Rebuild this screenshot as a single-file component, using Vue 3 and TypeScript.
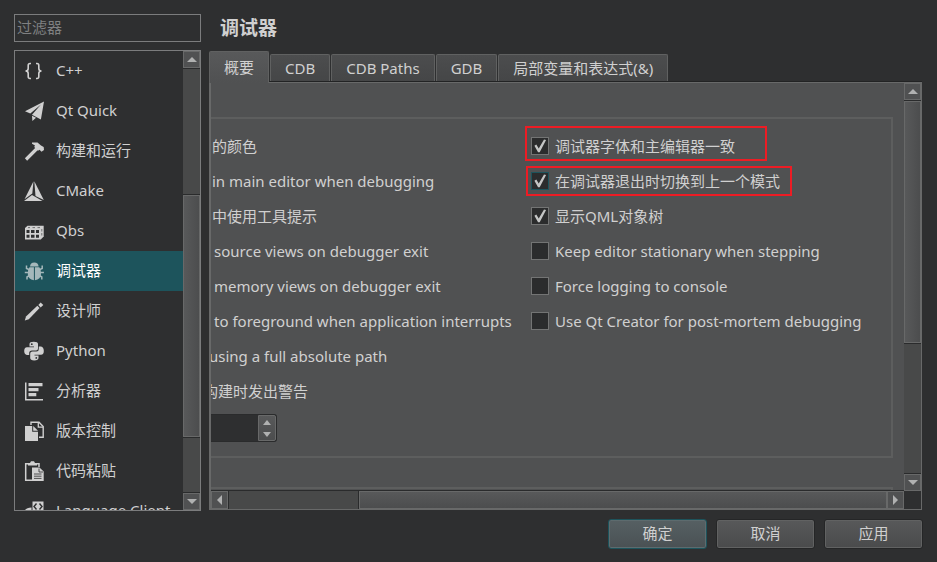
<script setup lang="ts">
import { ref } from 'vue'

interface Category {
  id: string
  label: string
}

interface Option {
  label: string
  checked: boolean
  mark?: 'first' | 'second'
}

const categories: Category[] = [
  { id: 'cpp', label: 'C++' },
  { id: 'quick', label: 'Qt Quick' },
  { id: 'build', label: '构建和运行' },
  { id: 'cmake', label: 'CMake' },
  { id: 'qbs', label: 'Qbs' },
  { id: 'debugger', label: '调试器' },
  { id: 'designer', label: '设计师' },
  { id: 'python', label: 'Python' },
  { id: 'analyzer', label: '分析器' },
  { id: 'vcs', label: '版本控制' },
  { id: 'paste', label: '代码粘贴' },
  { id: 'client', label: 'Language Client' },
]

const tabs: string[] = ['概要', 'CDB', 'CDB Paths', 'GDB', '局部变量和表达式(&)']

const leftLines: { text: string; cut?: 'word' | 'glyph' | 'space' }[] = [
  { text: '的颜色' },
  { text: 'in main editor when debugging' },
  { text: '中使用工具提示' },
  { text: 'source views on debugger exit', cut: 'space' },
  { text: 'memory views on debugger exit', cut: 'space' },
  { text: 'to foreground when application interrupts', cut: 'space' },
  { text: 'using a full absolute path', cut: 'word' },
  { text: '构建时发出警告', cut: 'glyph' },
]

const options = ref<Option[]>([
  { label: '调试器字体和主编辑器一致', checked: true, mark: 'first' },
  { label: '在调试器退出时切换到上一个模式', checked: true, mark: 'second' },
  { label: '显示QML对象树', checked: true },
  { label: 'Keep editor stationary when stepping', checked: false },
  { label: 'Force logging to console', checked: false },
  { label: 'Use Qt Creator for post-mortem debugging', checked: false },
])

const current = ref('debugger')
const activeTab = ref(0)
const filter = ref('')
const depth = ref('')
</script>

<template>
  <div class="dialog">
    <div class="body">
      <aside class="side">
        <input v-model="filter" class="filter" type="text" placeholder="过滤器" aria-label="过滤器" />
        <div class="list">
          <nav class="items">
            <button
              v-for="c in categories"
              :key="c.id"
              type="button"
              class="item"
              :class="{ selected: c.id === current }"
              @click="current = c.id"
            >
              <svg class="icon" viewBox="0 0 20 20" aria-hidden="true">
                <g v-if="c.id === 'cpp'" fill="none" stroke="currentColor" stroke-width="1.6">
                  <path d="M7 2.5H6Q4.200 2.500 4.200 4.500V7.500Q4.200 10 1.500 10Q4.200 10 4.200 12.500V15.500Q4.200 17.500 6 17.500H7" />
                  <path d="M12 2.500H13Q14.800 2.500 14.800 4.500V7.500Q14.800 10 17.500 10Q14.800 10 14.800 12.500V15.500Q14.800 17.500 13 17.500H12" />
                </g>
                <g v-else-if="c.id === 'quick'" fill="currentColor">
                  <path d="M20 0.500L1 10.200L6.300 12.600L17 3.500L8 13.700L16.900 18.500Z" />
                  <path d="M8 14.700L12 16.800L8.400 20Z" />
                </g>
                <g v-else-if="c.id === 'build'">
                  <path d="M2 18.500L13 7.500" stroke="currentColor" stroke-width="3.200" fill="none" />
                  <path d="M8 1.500H13.500L17 4.500L19.700 6L20 9L17.500 10.800L15.500 8.800L14 9.800L10.200 6L11 4.500L8 2.800Z" fill="currentColor" />
                </g>
                <g v-else-if="c.id === 'cmake'" fill="currentColor">
                  <path d="M9.500 0.300L8.300 12.500L0.500 18.300Z" />
                  <path d="M10.300 0.300L19.800 19L11.500 14.900Z" />
                  <path d="M8 14L18.500 19.900H0Z" />
                </g>
                <g v-else-if="c.id === 'qbs'">
                  <path d="M1 7L3.500 4.800H19.700V15.500L16.800 18.500H1Z" fill="currentColor" />
                  <path d="M2.500 9H5.500V12H2.500ZM7 9H10.500V12H7ZM12 9H15V12H12ZM2.500 13.700H5.500V16.800H2.500ZM7 13.700H10.500V16.800H7ZM12 13.700H15V16.800H12Z" fill="#2e2f30" />
                  <path d="M4 6.600H6M8.500 6.600H11M13.500 6.600H16M17.800 8V10.500M17.800 12V14.500" stroke="#2e2f30" stroke-width="0.600" />
                </g>
                <g v-else-if="c.id === 'debugger'">
                  <path d="M6 5.500Q6.300 1.500 10.300 1.500Q14.300 1.500 14.600 5.500Z" fill="currentColor" />
                  <path d="M9.900 6.300V19.300Q4 18.500 3.800 13Q3.600 8.500 5.500 6.300ZM10.900 6.300V19.300Q16.800 18.500 17 13Q17.200 8.500 15.300 6.300Z" fill="currentColor" />
                  <path d="M5 8.500L2.500 7.500V4.500M5 11.500H0.800M5.500 14.500L3 16V18.500M15.700 8.500L18.200 7.500V4.500M15.700 11.500H19.900M15.300 14.500L17.800 16V18.500" stroke="currentColor" stroke-width="1.500" fill="none" />
                </g>
                <g v-else-if="c.id === 'designer'" fill="currentColor">
                  <path d="M0.800 19.500L2 15.500L13.300 4.800L15.600 7L4.800 18.300Z" />
                  <path d="M14.300 4.100L16.700 1.400L19.300 4L16.700 6.500Z" />
                </g>
                <g v-else-if="c.id === 'python'">
                  <path d="M5.500 5.500V3Q5.500 0.700 9.800 0.700Q14 0.700 14 3V7.500Q14 9.500 12 9.500H8Q5.200 9.500 5.200 12V14H3Q0.200 13.500 0.200 10Q0.200 6.200 3 6.200H10V5.500Z" fill="currentColor" />
                  <path d="M14.800 5.500H17Q19.800 6 19.800 10Q19.800 13.800 17 13.800H10.500V14.500H14.500V17Q14.500 19.400 10.200 19.400Q6.200 19.400 6.200 17V12.500Q6.200 10.500 8.500 10.500H12.500Q14.800 10.500 14.800 8Z" fill="currentColor" />
                  <circle cx="7.800" cy="3.200" r="0.900" fill="#2e2f30" />
                  <circle cx="12.300" cy="16.900" r="0.900" fill="#2e2f30" />
                </g>
                <g v-else-if="c.id === 'analyzer'" fill="currentColor">
                  <path d="M1 1.500H2.500V18H19V19.500H1Z" />
                  <path d="M4.500 2H18.500V5.300H4.500ZM4.500 7H14.500V10.300H4.500ZM4.500 12H12.300V15.300H4.500Z" />
                </g>
                <g v-else-if="c.id === 'vcs'">
                  <path d="M7 4V1.300H15L19.200 5.500V16.200H15" stroke="currentColor" stroke-width="1.400" fill="none" />
                  <path d="M14.300 1.500V6.200H19" stroke="currentColor" stroke-width="1.300" fill="none" />
                  <path d="M1 5H8.200V10.800H14V20H1Z" fill="currentColor" />
                  <path d="M9.200 5L14 9.800H9.200Z" fill="currentColor" />
                </g>
                <g v-else-if="c.id === 'paste'">
                  <path d="M8 19.300H1.700V2.700H15V6" stroke="currentColor" stroke-width="1.500" fill="none" />
                  <path d="M4 2H6L7 0.300H10L11 2H13V4.500H4Z" fill="currentColor" />
                  <path d="M8 6.500H15.500L19.700 10.500V20H8Z" fill="currentColor" />
                  <path d="M15 7.500V11H19M10 13H17.500M10 15.200H17.500M10 17.400H17.500" stroke="#2e2f30" stroke-width="0.800" fill="none" />
                </g>
                <g v-else>
                  <path d="M8.500 0.500H19.500V11H13L8.500 12Z" fill="currentColor" />
                  <path d="M12.500 2.500L10 5.500L12.500 8.500M15.500 2.500L18 5.500L15.500 8.500" stroke="#2e2f30" stroke-width="1.400" fill="none" />
                  <path d="M0.500 11Q1 6.500 7.500 6.500V13H0.500Z" fill="currentColor" />
                </g>
              </svg>
              <span>{{ c.label }}</span>
            </button>
          </nav>
          <div class="vbar list-bar">
            <button type="button" class="step" aria-label="Scroll up"><i class="up"></i></button>
            <div class="space before"></div>
            <div class="thumb"></div>
            <div class="space after"></div>
            <button type="button" class="step" aria-label="Scroll down"><i class="down"></i></button>
          </div>
        </div>
      </aside>

      <main class="content">
        <h1>调试器</h1>
        <div class="tabs" role="tablist">
          <button
            v-for="(t, i) in tabs"
            :key="t"
            type="button"
            role="tab"
            class="tab"
            :class="{ active: i === activeTab }"
            :aria-selected="i === activeTab"
            @click="activeTab = i"
          >{{ t }}</button>
        </div>
        <div class="panel">
          <div class="view">
            <section class="group">
              <div class="columns">
                <div class="lines">
                  <div v-for="l in leftLines" :key="l.text" class="row" :class="l.cut">{{ l.text }}</div>
                </div>
                <div class="checks">
                  <div v-for="o in options" :key="o.label" class="row">
                    <label class="check" :class="o.mark">
                      <input v-model="o.checked" type="checkbox" />
                      <span>{{ o.label }}</span>
                    </label>
                  </div>
                </div>
              </div>
              <div class="spin">
                <input v-model="depth" type="text" aria-label="Value" />
                <div class="spin-buttons">
                  <button type="button" aria-label="Increase"><i class="up"></i></button>
                  <button type="button" aria-label="Decrease"><i class="down"></i></button>
                </div>
              </div>
            </section>
            <section class="group next"></section>
          </div>
          <div class="vbar panel-bar">
            <button type="button" class="step" aria-label="Scroll up"><i class="up"></i></button>
            <div class="thumb"></div>
            <div class="space after"></div>
            <button type="button" class="step" aria-label="Scroll down"><i class="down"></i></button>
          </div>
          <div class="hbar">
            <button type="button" class="step" aria-label="Scroll left"><i class="left"></i></button>
            <div class="space"></div>
            <div class="thumb"></div>
            <button type="button" class="step" aria-label="Scroll right"><i class="right"></i></button>
          </div>
          <div class="corner"></div>
        </div>
      </main>
    </div>
    <footer class="footer">
      <button type="button" class="push default">确定</button>
      <button type="button" class="push">取消</button>
      <button type="button" class="push">应用</button>
    </footer>
  </div>
</template>

<style>
body {
  margin: 0;
  background: #2e2f30;
}
</style>

<style scoped>
.dialog,
.dialog * {
  box-sizing: border-box;
}
.dialog {
  display: flex;
  flex-direction: column;
  gap: 8px;
  height: 100vh;
  padding: 14px 14px 13px;
  background: #2e2f30;
  color: #d0d0d0;
  font: 15px/20px "Noto Sans", "Noto Sans CJK SC", sans-serif;
}
button,
input {
  margin: 0;
  padding: 0;
  border: 0;
  border-radius: 0;
  font: inherit;
  color: inherit;
  outline: none;
}
.body {
  display: grid;
  grid-template-columns: 187px minmax(0, 1fr);
  gap: 8px;
  flex: 1;
  min-height: 0;
}
.side {
  display: flex;
  flex-direction: column;
  gap: 8px;
  min-height: 0;
}
.filter {
  flex: none;
  width: 100%;
  height: 28px;
  padding: 0 3px 2px 2px;
  border: 1px solid #7b7c7d;
  background: #2e2f30;
}
.filter::placeholder {
  color: #7f8081;
  opacity: 1;
}
.list {
  display: flex;
  flex: 1;
  min-height: 0;
  border: 1px solid #7b7c7d;
}
.items {
  flex: 1;
  min-width: 0;
  overflow: hidden;
}
.item {
  display: flex;
  align-items: center;
  gap: 12px;
  width: 100%;
  height: 40px;
  padding: 0 0 0 9px;
  background: none;
  text-align: left;
  white-space: nowrap;
}
.item span {
  padding-bottom: 2px;
}
.item.selected {
  background: #1d545c;
  color: #fff;
}
.icon {
  flex: none;
  width: 20px;
  height: 20px;
  color: #d0d0d0;
}
.selected .icon {
  color: #a5b8bb;
}

/* scroll bars */
.vbar,
.hbar {
  display: flex;
  background: #484949;
}
.vbar {
  flex-direction: column;
  width: 17px;
}
.step {
  display: flex;
  flex: none;
  align-items: center;
  justify-content: center;
  width: 17px;
  height: 17px;
  border: 1px solid #686969;
  background: #505152;
}
.vbar .thumb {
  border: 1px solid #686969;
  background: linear-gradient(90deg, #58595a, #4c4d4e);
}
.vbar .thumb,
.vbar .space {
  min-height: 0;
}
.list-bar .before {
  flex: 127;
  border-top: 1px solid #2a2b2c;
  border-bottom: 1px solid #2a2b2c;
}
.list-bar .thumb {
  flex: 243;
}
.list-bar .after {
  flex: 55;
  border-top: 1px solid #2a2b2c;
  border-bottom: 1px solid #2a2b2c;
}
.panel-bar .thumb {
  flex: 243;
}
.panel-bar .step:first-child {
  margin-bottom: 1px;
  box-shadow: 0 1px #2a2b2c;
}
.panel-bar .after {
  flex: 130;
  border-top: 1px solid #2a2b2c;
  border-bottom: 1px solid #2a2b2c;
}
.hbar .space {
  flex: 130;
  border: 1px solid #2a2b2c;
  border-width: 0 1px;
}
.hbar .thumb {
  flex: 529;
  border: 1px solid #686969;
  background: linear-gradient(#58595a, #4c4d4e);
}
.hbar .step {
  height: 100%;
}
.up,
.down,
.left,
.right {
  display: block;
  border: 5px solid transparent;
}
.up {
  border-width: 0 5px 5px;
  border-bottom-color: #b0b1b1;
}
.down {
  border-width: 5px 5px 0;
  border-top-color: #b0b1b1;
}
.left {
  border-width: 5px 5px 5px 0;
  border-right-color: #b0b1b1;
}
.right {
  border-width: 5px 0 5px 5px;
  border-left-color: #b0b1b1;
}

/* page */
.content {
  display: flex;
  flex-direction: column;
  min-width: 0;
  min-height: 0;
}
h1 {
  flex: none;
  height: 37px;
  margin: 0;
  padding-left: 11px;
  font-size: 19px;
  font-weight: 700;
  line-height: 28px;
}
.tabs {
  display: flex;
  flex: none;
  align-items: flex-end;
  gap: 1px;
  height: 30px;
}
.tab {
  height: 27px;
  padding: 0 14px;
  border: 1px solid #606161;
  border-bottom: 0;
  border-radius: 2px 2px 0 0;
  background: linear-gradient(#4c4d4e, #454647);
  white-space: nowrap;
}
.tab.active {
  position: relative;
  z-index: 1;
  height: 32px;
  margin-bottom: -2px;
  padding-bottom: 2px;
  background: linear-gradient(#58595a, #505152);
}
.panel {
  display: grid;
  grid-template-columns: minmax(0, 1fr) 17px;
  grid-template-rows: minmax(0, 1fr) 18px;
  flex: 1;
  min-height: 0;
  border: 1px solid #686969;
  border-left-width: 2px;
  background: #505152;
  box-shadow: 0 -1px #222324;
  margin: 1px 1px 1px 0;
}
.view {
  display: flex;
  flex-direction: column;
  gap: 29px;
  min-height: 0;
  padding: 34px 11px 0 0;
  overflow: hidden;
  border-bottom: 1px solid #2a2b2c;
}
.group {
  flex: none;
  height: 341px;
  padding-top: 9px;
  border: 2px solid #5d5e5e;
  border-left: 0;
}
.next {
  height: 40px;
}
.columns {
  display: grid;
  grid-template-columns: 320px minmax(0, 1fr);
}
.row {
  display: flex;
  align-items: center;
  height: 35px;
  padding-left: 1px;
  white-space: nowrap;
}
.checks .row {
  padding-left: 0;
}
.row.space {
  padding-left: 3px;
}
.row.word {
  margin-left: -3px;
}
.row.glyph {
  margin-left: -9px;
}
.check {
  position: relative;
  display: flex;
  align-items: center;
  gap: 6px;
}
.check input {
  appearance: none;
  width: 18px;
  height: 18px;
  border: 1px solid #737474;
  background: #2b2c2d;
}
.check.second input {
  border-color: #1d545c;
}
.check input:checked::before {
  content: "";
  display: block;
  width: 16px;
  height: 16px;
  background: #c4c5c5;
  clip-path: polygon(15% 52%, 27% 44%, 42% 68%, 75% 12%, 88% 16%, 48% 92%, 38% 92%);
}
.first::after,
.second::after {
  content: "";
  position: absolute;
  border: 2px solid #ed1c24;
  pointer-events: none;
}
.first::after {
  inset: -10px -32px -5px -6px;
}
.second::after {
  inset: -5px -12px -5px -5px;
}
.spin {
  display: flex;
  width: 66px;
  height: 28px;
  margin-top: 6px;
  border: 1px solid #2a2b2c;
  border-left: 0;
  border-radius: 0 3px 3px 0;
  background: #2e2f30;
}
.spin input {
  flex: 1;
  min-width: 0;
  background: #2e2f30;
}
.spin-buttons {
  display: flex;
  flex-direction: column;
  width: 18px;
  border: 1px solid #686969;
  border-radius: 0 2px 2px 0;
  background: linear-gradient(#58595a, #4c4d4e);
}
.spin-buttons button {
  display: flex;
  flex: 1;
  align-items: center;
  justify-content: center;
  background: none;
}
.spin-buttons i {
  border-left-width: 4px;
  border-right-width: 4px;
}
.corner {
  background: #2e2f30;
}
.footer {
  display: flex;
  flex: none;
  justify-content: flex-end;
  gap: 9px;
}
.push {
  width: 99px;
  height: 30px;
  padding-bottom: 2px;
  border: 1px solid #252627;
  border-radius: 3px;
  background: linear-gradient(#58595a, #4a4b4c);
  box-shadow: inset 0 0 0 1px #616262;
}
.push.default {
  border-color: #1d545c;
  background: linear-gradient(#566063, #4a5154);
  box-shadow: inset 0 0 0 1px #5d6b6e;
}
</style>
